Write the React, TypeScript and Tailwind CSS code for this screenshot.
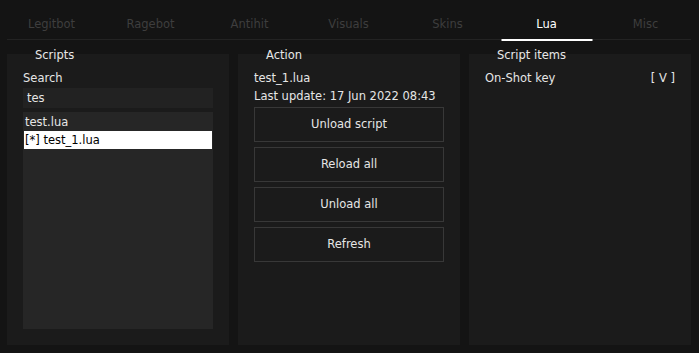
import React from "react";

const tabs = ["Legitbot", "Ragebot", "Antihit", "Visuals", "Skins", "Lua", "Misc"];

function Panel({ title, children }: { title: string; children: React.ReactNode }) {
  return (
    <div className="relative flex h-full w-[222px] flex-col bg-[#1b1b1b] px-4 pt-[15px] pb-4">
      <div className="absolute left-[28px] top-[-8px] leading-[18px] text-[#e8e8e8]">{title}</div>
      {children}
    </div>
  );
}

export default function App() {
  const buttons = ["Unload script", "Reload all", "Unload all", "Refresh"];
  return (
    <div
      className="flex h-[353px] w-[699px] flex-col overflow-hidden bg-[#141414] text-[11.5px] text-[#e6e6e6]"
      style={{ fontFamily: '"DejaVu Sans", Verdana, sans-serif' }}
    >
      <div className="flex h-[39px] px-[2px]">
        {tabs.map((t) => (
          <div
            key={t}
            className={
              "relative w-[99px] pt-[15px] text-center leading-[18px] " +
              (t === "Lua" ? "text-white" : "text-[#3e3e3e]")
            }
          >
            {t}
            {t === "Lua" && (
              <div className="absolute left-1/2 top-[39px] h-[2px] w-[91px] -translate-x-1/2 bg-white" />
            )}
          </div>
        ))}
      </div>
      <div className="ml-[7px] mr-[8px] h-px bg-[#232323]" />

      <div className="mt-[14px] flex h-[291px] gap-[9px] pl-[7px]">
        <Panel title="Scripts">
          <div className="leading-[18px]">Search</div>
          <div className="mt-px h-[20px] bg-[#222222] pl-1 leading-[20px]">tes</div>
          <div className="mt-[4px] flex-1 bg-[#262626] p-px">
            <div className="pl-px leading-[18px]">test.lua</div>
            <div className="bg-white pl-px leading-[18px] text-black">[*] test_1.lua</div>
          </div>
        </Panel>

        <Panel title="Action">
          <div className="leading-[18px]">test_1.lua</div>
          <div className="leading-[18px]">Last update: 17 Jun 2022 08:43</div>
          <div className="mt-[2px] flex flex-col gap-[5px]">
            {buttons.map((b) => (
              <div
                key={b}
                className="flex h-[35px] items-center justify-center border border-[#383838] bg-[#1b1b1b] pt-px"
              >
                {b}
              </div>
            ))}
          </div>
        </Panel>

        <Panel title="Script items">
          <div className="flex justify-between leading-[18px]">
            <span>On-Shot key</span>
            <span>[ V ]</span>
          </div>
        </Panel>
      </div>
    </div>
  );
}
